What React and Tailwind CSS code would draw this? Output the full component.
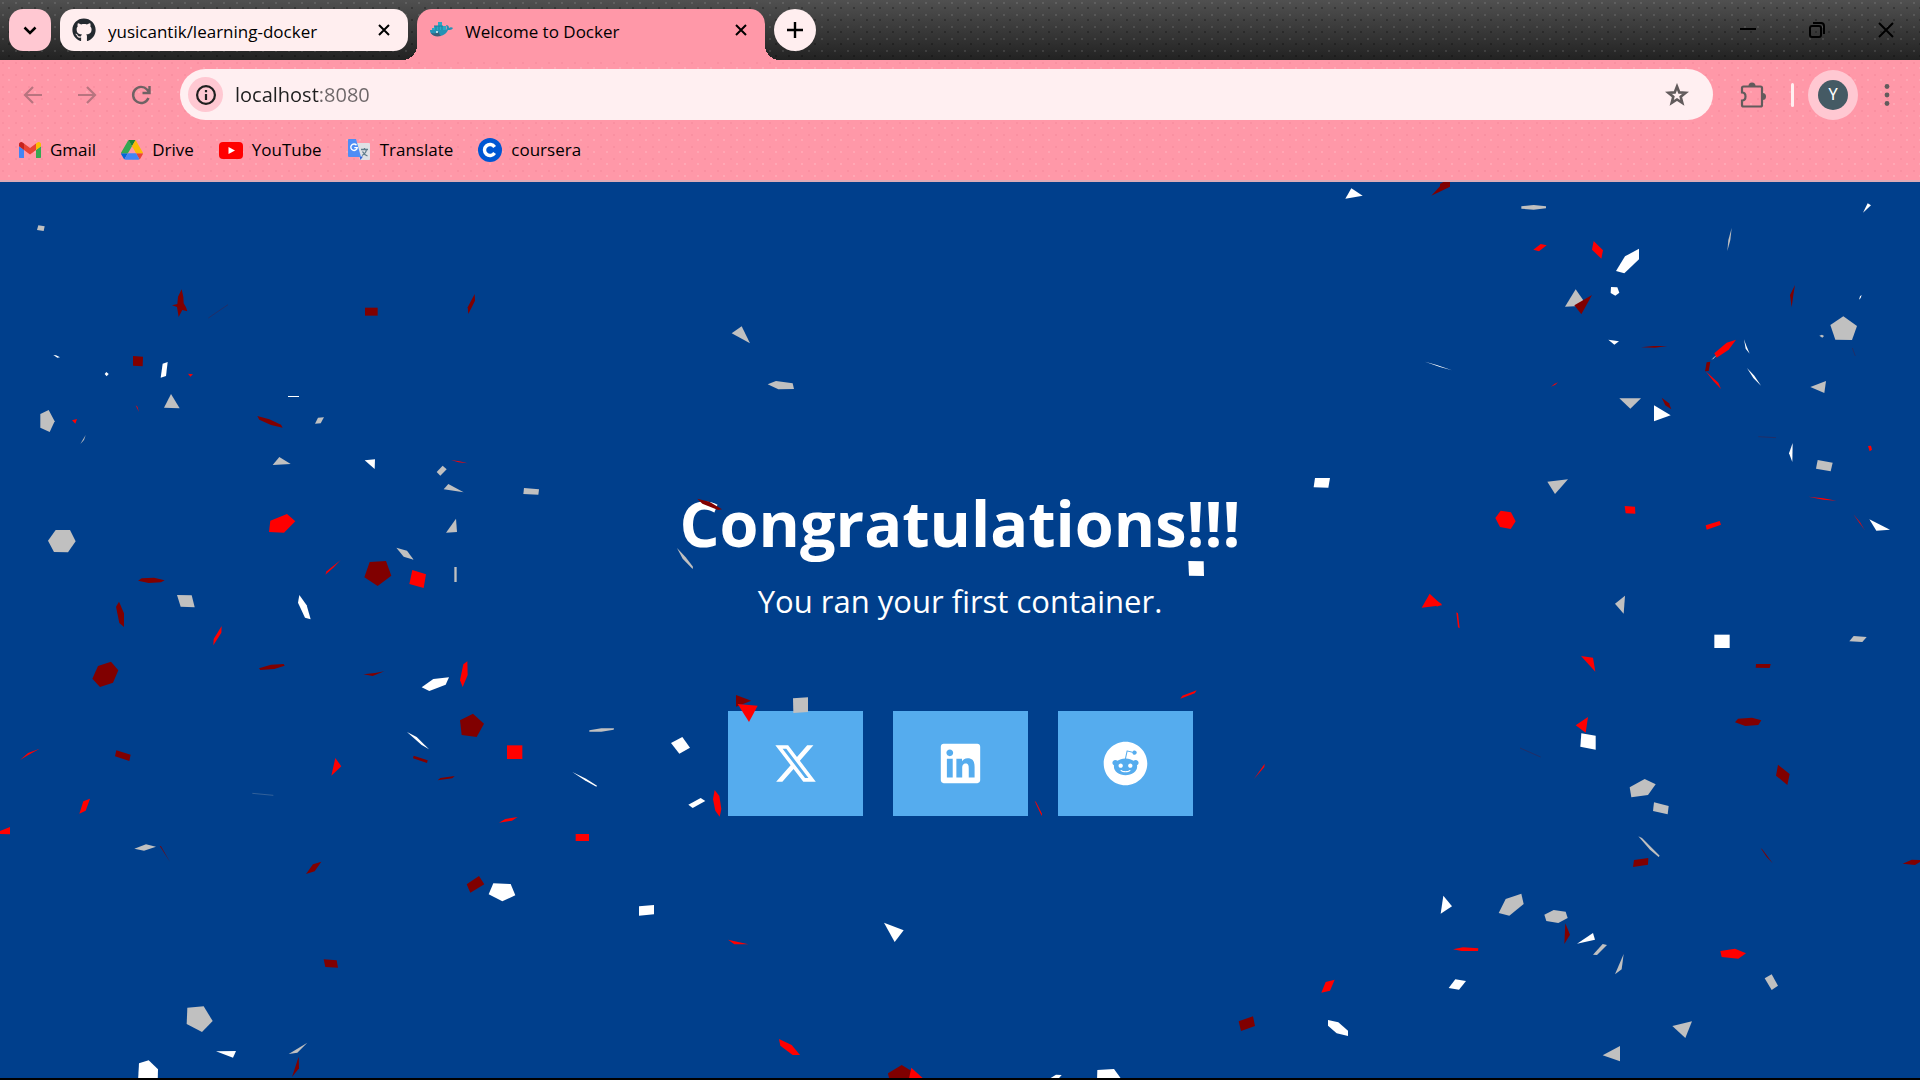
import { FaGithub, FaLinkedin, FaReddit } from "react-icons/fa";
import { FaXTwitter } from "react-icons/fa6";

const R = "#ff0000";
const M = "#800000";
const G = "#c0c0c0";
const W = "#ffffff";

/* Confetti pieces, grouped by region of the stage. Units are thirds of a pixel. */
const CONFETTI = [
  {
    x: 0,
    y: -6,
    pieces: [
      [G, "115,136 134,139 131,153 111,150"],
      [M, "545,328 550,350 551,370 558,382 562,394 547,390 536,411 531,381 516,376 532,372 534,350"],
      [M, "1095,383 1133,383 1133,407 1095,407"],
      [M, "1424,342 1425,362 1405,402 1403,382"],
      [W, "160,525 168,526 180,532 172,533"],
      [W, "319,576 326,582 320,589 314,582"],
      [M, "399,528 429,530 428,559 399,557"],
      [W, "488,551 503,546 498,588 482,593"],
      [R, "564,581 579,583 571,590"],
      [R, "407,676 412,680 417,696"],
      [G, "513,642 539,685 492,683"],
      [G, "121,702 146,690 164,724 149,756 121,743"],
      [R, "216,721 231,717 226,731"],
      [G, "257,765 252,780 241,792"],
      [W, "864,648 897,648 897,651 864,651"],
      [M, "772,708 808,718 843,734 848,743 813,735 778,719"],
      [G, "954,713 972,712 962,730 945,731"],
      [G, "838,831 872,852 818,855"],
      [W, "1094,841 1125,838 1124,867"],
      [R, "1353,840 1378,844 1403,850 1376,847"],
      [G, "1328,857 1340,868 1321,887 1310,876"],
      [G, "1345,912 1391,937 1331,928"],
      [R, "811,1022 861,1002 886,1024 852,1058 807,1056"],
      [G, "1368,1016 1371,1056 1338,1058"],
      [G, "167,1050 210,1050 227,1084 204,1117 162,1116 144,1082"],
      [G, "1189,1103 1221,1112 1241,1139 1211,1130"],
      [R, "1022,1140 1000,1163 976,1184 980,1174"],
      [M, "1109,1146 1158,1143 1174,1187 1133,1218 1093,1192"],
      [R, "1237,1170 1278,1183 1271,1224 1228,1212"],
      [G, "1363,1161 1370,1161 1370,1206 1363,1206"],
      [M, "425,1195 462,1193 494,1201 483,1207 446,1209 414,1202"],
      [G, "531,1245 575,1246 584,1282 542,1280"],
      [W, "898,1245 920,1276 932,1318 915,1313 894,1268"],
      [M, "357,1265 372,1300 372,1341 358,1329 348,1280"],
    ],
  },
  {
    x: 0,
    y: 1344,
    pieces: [
      [R, "665,-12 664,8 640,46 641,27"],
      [M, "294,108 333,95 355,121 339,158 300,171 277,146"],
      [M, "777,115 813,104 851,102 854,107 823,117 781,120"],
      [M, "1090,133 1125,129 1153,124 1118,138"],
      [W, "1300,147 1347,142 1337,164 1288,183 1265,172"],
      [R, "1390,103 1402,94 1403,135 1388,171 1380,151"],
      [M, "1380,271 1419,251 1452,281 1430,321 1385,315"],
      [R, "119,356 85,375 60,390 84,369"],
      [M, "349,361 392,374 388,393 345,379"],
      [W, "1221,306 1250,321 1287,358 1264,344"],
      [M, "1241,377 1283,391 1281,399 1239,385"],
      [M, "1321,444 1364,438 1357,445 1313,451"],
      [R, "1006,384 1024,409 994,437"],
      [R, "250,514 270,506 257,542 238,551"],
      [R, "-16,609 30,591 30,613 -10,612"],
      [G, "438,643 468,650 432,662 403,656"],
      [M, "479,647 483,649 510,696"],
      [M, "939,703 964,695 944,724 918,732"],
      [M, "1437,738 1453,763 1411,788 1400,763"],
      [M, "971,988 1010,991 1014,1013 976,1011"],
      [G, "562,1133 611,1129 638,1173 606,1206 560,1182"],
      [W, "648,1264 708,1263 699,1283"],
      [G, "922,1238 892,1268 866,1272"],
      [M, "896,1280 897,1315 876,1341"],
      [W, "417,1300 446,1291 474,1318 473,1355 414,1355"],
    ],
  },
  {
    x: 1440,
    y: -6,
    pieces: [
      [G, "785,439 810,490 755,460"],
      [G, "863,613 888,603 938,610 942,627 895,628"],
      [G, "132,924 177,928 175,944 130,942"],
      [M, "652,956 688,965 726,988 714,990 667,971"],
      [G, "591,1104 617,1132 639,1160 638,1167 608,1136"],
    ],
  },
  {
    x: 1440,
    y: 1344,
    pieces: [
      [G, "328,301 364,295 402,295 401,299 364,305 328,305"],
      [R, "81,346 127,346 127,387 81,387"],
      [W, "573,339 607,321 630,353 598,371"],
      [W, "277,426 318,446 351,467 349,470 314,451"],
      [W, "625,524 662,504 676,513 638,534"],
      [R, "704,480 718,498 724,537 719,560 706,542 699,508"],
      [R, "57,578 76,567 113,561 96,572"],
      [R, "287,612 327,612 327,633 287,633"],
      [M, "768,195 814,212 768,230"],
      [R, "773,222 833,227 807,276"],
      [G, "939,205 984,202 984,246 940,249"],
      [W, "40,760 92,762 106,796 67,814 26,793"],
      [W, "477,829 522,825 522,853 477,857"],
      [R, "744,929 805,943 763,943"],
      [W, "1212,878 1271,901 1244,936"],
      [R, "897,1227 935,1245 960,1275 938,1275 901,1247"],
      [M, "1224,1330 1265,1305 1296,1324 1290,1350 1228,1350"],
      [R, "1294,1313 1328,1344 1286,1350"],
    ],
  },
  {
    x: 2880,
    y: -6,
    pieces: [
      [W, "1174,25 1208,47 1156,56"],
      [M, "1414,47 1446,12 1470,-10 1470,20"],
      [W, "1395,545 1430,555 1476,571 1440,561"],
      [W, "1065,894 1110,894 1105,923 1061,922"],
      [W, "685,1143 731,1144 732,1188 687,1187"],
      [R, "1409,1241 1446,1276 1385,1283"],
    ],
  },
  {
    x: 2880,
    y: 1344,
    pieces: [
      [R, "667,197 710,181 704,190 661,206"],
      [R, "914,401 913,411 882,447"],
      [R, "224,513 228,516 246,551 245,558"],
      [R, "1097,1056 1124,1049 1110,1082 1084,1088"],
      [M, "836,1174 879,1159 885,1188 843,1203"],
      [W, "1104,1170 1135,1177 1164,1202 1164,1218 1130,1210 1104,1187"],
      [W, "272,1344 288,1334 305,1335 292,1350"],
      [W, "412,1320 462,1317 486,1350 411,1350"],
    ],
  },
  {
    x: 4320,
    y: -6,
    pieces: [
      [M, "0,12 24,-2 30,18 0,32"],
      [G, "244,79 281,75 318,79 318,85 281,89 244,86"],
      [R, "302,192 320,196 297,214 280,209"],
      [R, "461,183 489,211 484,236 456,209"],
      [W, "555,229 597,206 597,238 553,280 528,273"],
      [W, "513,321 532,322 538,338 526,347 512,339"],
      [W, "1283,70 1293,76 1269,98"],
      [G, "875,144 871,180 862,213 865,180"],
      [G, "407,328 432,364 418,378 375,380"],
      [M, "456,345 424,403 403,376"],
      [W, "505,479 537,484 523,494"],
      [M, "603,502 640,498 682,498 645,503"],
      [M, "1065,315 1060,345 1055,382 1050,345"],
      [W, "1265,345 1262,354 1257,359 1260,349"],
      [G, "1210,409 1251,438 1236,480 1186,479 1171,435"],
      [G, "1138,467 1146,464 1152,468 1147,473"],
      [R, "860,488 888,479 866,509 830,533 823,520"],
      [G, "830,526 822,535 814,540 822,531"],
      [M, "800,547 811,545 806,573 795,574"],
      [R, "797,574 835,608 843,627 820,603"],
      [W, "912,478 919,497 929,521 917,506"],
      [W, "921,564 943,587 963,617 940,594"],
      [R, "354,607 346,614 333,620 343,612"],
      [G, "538,655 603,655 571,686"],
      [M, "665,653 687,670 694,688 676,676"],
      [W, "642,676 692,706 642,724"],
      [G, "1158,603 1153,639 1111,621"],
      [W, "1058,789 1057,846 1047,820"],
      [R, "1284,798 1293,797 1296,809 1289,814"],
      [G, "1133,840 1178,848 1172,874 1128,866"],
      [G, "322,905 384,898 345,942"],
      [R, "182,992 213,997 227,1024 212,1047 180,1041 166,1014"],
      [R, "554,978 585,980 586,1001 557,1000"],
      [R, "797,1036 839,1023 843,1034 800,1049"],
      [R, "1105,950 1150,955 1189,962 1150,959"],
      [R, "1240,1003 1260,1027 1274,1050 1258,1028"],
      [W, "1288,1018 1350,1049 1309,1052"],
      [G, "555,1247 551,1301 525,1271"],
      [R, "-10,1262 6,1273 -10,1280"],
      [R, "49,1297 54,1300 59,1345 54,1342"],
    ],
  },
  {
    x: 4320,
    y: 1344,
    pieces: [
      [R, "423,78 459,83 466,125"],
      [W, "823,14 869,14 869,54 823,54"],
      [G, "1241,18 1280,21 1267,36 1228,34"],
      [M, "948,102 992,102 989,114 947,113"],
      [R, "444,261 437,308 407,286"],
      [W, "424,310 467,317 467,359 421,350"],
      [M, "894,266 936,263 964,271 955,285 916,288 885,277"],
      [M, "1014,404 1049,432 1042,465 1008,437"],
      [G, "569,472 614,447 647,463 624,495 574,502"],
      [G, "642,517 686,528 683,553 639,543"],
      [G, "595,619 606,624 659,677 656,681 630,659"],
      [M, "582,690 625,684 624,704 579,711"],
      [M, "962,654 968,659 998,700 980,681"],
      [M, "1415,689 1450,690 1425,705 1388,701"],
      [W, "10,797 36,829 2,851"],
      [G, "197,807 244,791 251,822 208,857 176,849"],
      [G, "313,854 341,840 377,845 383,864 355,879 319,873"],
      [M, "376,880 390,914 373,942"],
      [W, "459,909 465,929 411,941"],
      [G, "488,942 501,945 471,975 459,974"],
      [G, "551,972 545,1018 525,1033"],
      [R, "39,958 69,952 115,955 114,963 65,963"],
      [W, "46,1048 78,1053 57,1079 26,1074"],
      [R, "841,963 885,956 918,970 895,986 845,981"],
      [G, "974,1045 995,1033 1014,1067 995,1080"],
      [G, "697,1188 756,1174 736,1224"],
      [G, "540,1248 540,1294 488,1276"],
    ],
  },
];

/* Pieces seen nearly edge-on, drawn as faint hairlines. */
const HAIRLINES = [
  [G, "757,1834 820,1840"],
  [M, "625,408 684,368"],
  [M, "4560,1698 4622,1725"],
  [M, "5275,764 5328,767"],
  [M, "5557,498 5566,522"],
];

function Confetti() {
  return (
    <svg
      aria-hidden="true"
      viewBox="0 0 5760 2688"
      preserveAspectRatio="xMidYMid slice"
      className="pointer-events-none absolute inset-0 h-full w-full"
    >
      {CONFETTI.map((group, i) => (
        <g key={i} transform={`translate(${group.x} ${group.y})`}>
          {group.pieces.map(([fill, points], j) => (
            <polygon key={j} points={points} fill={fill} />
          ))}
        </g>
      ))}
      {HAIRLINES.map(([stroke, points], i) => (
        <polyline key={i} points={points} stroke={stroke} strokeWidth="2" strokeOpacity="0.4" fill="none" />
      ))}
    </svg>
  );
}

function CloseIcon({ className }) {
  return (
    <svg viewBox="0 0 12 12" className={className} fill="none" stroke="currentColor" strokeWidth="2">
      <path d="M1 1l10 10M11 1L1 11" />
    </svg>
  );
}

function DockerIcon() {
  return (
    <svg viewBox="0 0 24 24" className="h-6 w-6 shrink-0">
      <path d="M9 4h4v4H9zM5 8h12v4H5zM3 10h4v3H3z" fill="#2aa8c4" />
      <path d="M7 8v4M10 8v4M13 8v4M5 8h9" stroke="#1b7f9d" strokeWidth="1" />
      <path d="M1 12h16c1-1 1-3 0-5 2 0 3 1 3 3 1-1 3-1 4 0-1 2-3 2-5 2-2 4-5 6-10 6-5 0-8-2-8-6z" fill="#2592b5" />
      <path d="M2 15c4 1 6 0 8-1 0 2 1 3 2 4-5 1-8 0-10-3z" fill="#3a5f78" />
      <circle cx="8" cy="14" r="1" fill="#e6f4f8" />
    </svg>
  );
}

function GmailIcon() {
  return (
    <svg viewBox="52 42 88 66" className="w-[22px] shrink-0">
      <path fill="#4285f4" d="M58 108h14V74L52 59v43c0 3.32 2.69 6 6 6" />
      <path fill="#34a853" d="M120 108h14c3.32 0 6-2.69 6-6V59l-20 15" />
      <path fill="#fbbc04" d="M120 48v26l20-15v-8c0-7.42-8.47-11.65-14.4-7.2" />
      <path fill="#ea4335" d="M72 74V48l24 18 24-18v26L96 92" />
      <path fill="#c5221f" d="M52 51v8l20 15V48l-5.6-4.2c-5.94-4.45-14.4-.22-14.4 7.2" />
    </svg>
  );
}

function DriveIcon() {
  return (
    <svg viewBox="0 0 87.3 78" className="w-[22px] shrink-0">
      <path fill="#0066da" d="m6.6 66.85 3.85 6.65c.8 1.4 1.95 2.5 3.3 3.3l13.75-23.8h-27.5c0 1.55.4 3.1 1.2 4.5z" />
      <path fill="#34a853" d="m43.65 25-13.75-23.8c-1.35.8-2.5 1.9-3.3 3.3l-25.4 44a9.06 9.06 0 0 0-1.2 4.5h27.5z" />
      <path fill="#ea4335" d="m73.55 76.8c1.35-.8 2.5-1.9 3.3-3.3l1.6-2.75 7.65-13.25c.8-1.4 1.2-2.95 1.2-4.5h-27.502l5.852 11.5z" />
      <path fill="#188038" d="m43.65 25 13.75-23.8c-1.35-.8-2.9-1.2-4.5-1.2h-18.5c-1.6 0-3.15.45-4.5 1.2z" />
      <path fill="#4285f4" d="m59.8 53h-32.3l-13.75 23.8c1.35.8 2.9 1.2 4.5 1.2h50.8c1.6 0 3.15-.45 4.5-1.2z" />
      <path fill="#fbbc04" d="m73.4 26.5-12.7-22c-.8-1.4-1.95-2.5-3.3-3.3l-13.75 23.8 16.15 28h27.45c0-1.55-.4-3.1-1.2-4.5z" />
    </svg>
  );
}

function YouTubeIcon() {
  return (
    <svg viewBox="0 0 24 17" className="w-6 shrink-0">
      <rect width="24" height="17" rx="4" fill="#ff0000" />
      <path d="M9.500 5v7l6.500-3.500z" fill="#fff" />
    </svg>
  );
}

function TranslateIcon() {
  return (
    <svg viewBox="0 0 24 24" className="h-6 w-6 shrink-0">
      <path d="M8 5h14a1 1 0 0 1 1 1v15a1 1 0 0 1-1 1H13z" fill="#dfe1e5" />
      <path d="M14 11.500h7M17.500 10v1.500M19.500 11.500c-.5 3-2.500 5-4.500 6M15.500 13.500c1 2 2.500 3.500 5 4.500" stroke="#5f7d8c" strokeWidth="1.300" fill="none" />
      <path d="M12.500 18.500h3.500L13.500 22z" fill="#3367d6" />
      <path d="M2 1h7l5 18H2a1 1 0 0 1-1-1V2a1 1 0 0 1 1-1z" fill="#4f8df5" />
      <path d="M9.500 7.200A3.200 3.200 0 1 0 10.200 9.600H7.300" stroke="#fff" strokeWidth="1.400" fill="none" />
    </svg>
  );
}

function CourseraIcon() {
  return (
    <svg viewBox="0 0 24 24" className="h-6 w-6 shrink-0">
      <circle cx="12" cy="12" r="12" fill="#0056d2" />
      <path d="M16.600 9A5.500 5.500 0 1 0 16.600 15" stroke="#fff" strokeWidth="3.400" fill="none" />
    </svg>
  );
}

const BOOKMARKS = [
  { label: "Gmail", Icon: GmailIcon },
  { label: "Drive", Icon: DriveIcon },
  { label: "YouTube", Icon: YouTubeIcon },
  { label: "Translate", Icon: TranslateIcon },
  { label: "coursera", Icon: CourseraIcon },
];

function TabStrip() {
  return (
    <div className="flex h-[60px] items-start bg-[radial-gradient(circle_at_3px_3px,rgba(255,255,255,0.1)_1px,transparent_1px),radial-gradient(circle_at_9px_8px,rgba(0,0,0,0.25)_1px,transparent_1px),linear-gradient(#505050,#222222)] bg-[length:13px_12px,13px_12px,100%_100%] pt-[9px] pl-[9px]">
      <button aria-label="Search tabs" className="flex h-[42px] w-[42px] items-center justify-center rounded-[14px] bg-[#ffc8d2]">
        <svg viewBox="0 0 14 9" className="w-[14px]" fill="none" stroke="#000" strokeWidth="2.500">
          <path d="M1.500 1.500L7 7l5.500-5.500" />
        </svg>
      </button>
      <div className="ml-[9px] flex h-[42px] w-[348px] items-center gap-3 rounded-[14px] bg-[#ffeeef] pr-[18px] pl-3">
        <FaGithub className="h-6 w-6 shrink-0 text-[#24292f]" />
        <span className="flex-1 truncate pt-[3px] text-[17px] leading-6 text-black">yusicantik/learning-docker</span>
        <button aria-label="Close yusicantik/learning-docker">
          <CloseIcon className="h-3 w-3" />
        </button>
      </div>
      <div className="relative ml-[9px] flex h-[51px] w-[348px] items-center gap-3 rounded-t-[15px] bg-[#ff98a8] pr-[18px] pb-[9px] pl-3 before:absolute before:bottom-0 before:-left-[15px] before:h-[15px] before:w-[15px] before:bg-[radial-gradient(circle_at_0_0,transparent_15px,#ff98a8_15px)] after:absolute after:-right-[15px] after:bottom-0 after:h-[15px] after:w-[15px] after:bg-[radial-gradient(circle_at_100%_0,transparent_15px,#ff98a8_15px)]">
        <DockerIcon />
        <span className="flex-1 truncate pt-[3px] text-[17px] leading-6 text-black">Welcome to Docker</span>
        <button aria-label="Close Welcome to Docker">
          <CloseIcon className="h-3 w-3" />
        </button>
      </div>
      <button aria-label="New tab" className="ml-[9px] flex h-[42px] w-[42px] items-center justify-center rounded-full bg-[#ffeeef]">
        <svg viewBox="0 0 16 16" className="w-4" stroke="#000" strokeWidth="2.400">
          <path d="M8 0v16M0 8h16" />
        </svg>
      </button>
      <div className="ml-auto flex h-[42px]">
        <button aria-label="Minimize" className="flex w-[69px] items-center justify-center">
          <svg viewBox="0 0 16 16" className="w-4" stroke="#000" strokeWidth="2">
            <path d="M0 7h16" />
          </svg>
        </button>
        <button aria-label="Restore" className="flex w-[69px] items-center justify-center">
          <svg viewBox="0 0 16 16" className="w-4" fill="none" stroke="#000" strokeWidth="2">
            <rect x="1" y="4" width="11" height="11" rx="2" />
            <path d="M4 1h8a3 3 0 0 1 3 3v8" />
          </svg>
        </button>
        <button aria-label="Close" className="flex w-[69px] items-center justify-center">
          <svg viewBox="0 0 16 16" className="w-4" stroke="#000" strokeWidth="2">
            <path d="M1 1l14 14M15 1L1 15" />
          </svg>
        </button>
      </div>
    </div>
  );
}

function Toolbar() {
  return (
    <div className="flex h-[51px] items-center">
      <div className="flex w-[180px] pl-[6px]">
        <button aria-label="Back" className="flex w-[54px] justify-center text-[#b8747f]">
          <svg viewBox="0 0 20 20" className="w-5" fill="none" stroke="currentColor" strokeWidth="2.200">
            <path d="M19 10H2.500M10 2L2 10l8 8" />
          </svg>
        </button>
        <button aria-label="Forward" className="flex w-[54px] justify-center text-[#b8747f]">
          <svg viewBox="0 0 20 20" className="w-5" fill="none" stroke="currentColor" strokeWidth="2.200">
            <path d="M1 10h16.500M10 2l8 8-8 8" />
          </svg>
        </button>
        <button aria-label="Reload" className="flex w-[54px] justify-center text-[#6f6264]">
          <svg viewBox="0 0 20 20" className="w-5" fill="none" stroke="currentColor" strokeWidth="2.400">
            <path d="M17.500 13A8 8 0 1 1 16 4.500L18 7M18.500 1v7h-7" />
          </svg>
        </button>
      </div>
      <div className="flex h-[51px] flex-1 items-center rounded-full bg-[#ffeff1] pr-6 pl-2">
        <button aria-label="View site information" className="flex h-[35px] w-[35px] items-center justify-center rounded-full bg-[#ffc8d2]">
          <svg viewBox="0 0 20 20" className="w-5" fill="none" stroke="#1f1f1f" strokeWidth="2.200">
            <circle cx="10" cy="10" r="8.900" />
            <path d="M10 9v6M10 5v2.200" />
          </svg>
        </button>
        <input
          aria-label="Address and search bar"
          defaultValue="localhost:8080"
          className="ml-3 min-w-0 flex-1 bg-[linear-gradient(90deg,#1f1f1f_84px,#6d6668_84px)] bg-clip-text text-[20px] leading-7 text-transparent outline-none"
        />
        <button aria-label="Bookmark this tab">
          <svg viewBox="0 0 24 24" className="w-6" fill="none" stroke="#625b5c" strokeWidth="2.600">
            <path d="M12 3.500l2.300 5.900 6.300.4-4.900 4 1.600 6.100L12 16.500l-5.300 3.400 1.600-6.100-4.900-4 6.300-.4z" />
          </svg>
        </button>
      </div>
      <button aria-label="Extensions" className="ml-[27px]">
        <svg viewBox="0 0 26 26" className="w-[26px]" fill="none" stroke="#625b5c" strokeWidth="2.200">
          <path d="M3.500 4.500h17a1.500 1.500 0 0 1 1.500 1.500v17a1.500 1.500 0 0 1-1.500 1.500h-17A1.500 1.500 0 0 1 2 23v-4.500c2 0 3.500-1.500 3.500-4S4 10.500 2 10.500V6a1.500 1.500 0 0 1 1.500-1.500z" />
          <path d="M8.500 4a3.500 3.500 0 0 1 7 0zM22.500 11a3.500 3.500 0 0 1 0 7z" fill="#625b5c" stroke="none" />
        </svg>
      </button>
      <div className="ml-[25px] h-6 w-[3px] rounded-full bg-[#ffeff1]" />
      <button aria-label="Profile Y" className="ml-[14px] flex h-[50px] w-[50px] items-center justify-center rounded-full bg-[#ffc8d2]">
        <span className="flex h-[30px] w-[30px] items-center justify-center rounded-full bg-[#455a64] font-[Roboto,sans-serif] text-[16px] leading-none text-white">
          Y
        </span>
      </button>
      <button aria-label="Menu" className="mr-[21px] ml-[17px]">
        <svg viewBox="0 0 24 24" className="w-6" fill="#625b5c">
          <circle cx="12" cy="3.500" r="2.400" />
          <circle cx="12" cy="12" r="2.400" />
          <circle cx="12" cy="20.500" r="2.400" />
        </svg>
      </button>
    </div>
  );
}

const SHARES = [
  { label: "Share on X", Icon: FaXTwitter },
  { label: "Share on LinkedIn", Icon: FaLinkedin },
  { label: "Share on Reddit", Icon: FaReddit },
];

export default function App() {
  return (
    <div className="flex min-h-screen flex-col border-b-2 border-black bg-[#003f8c] font-['Open_Sans','Noto_Sans',sans-serif]">
      <header>
        <TabStrip />
        <div className="h-[122px] border-b-2 border-[#dcaab7] bg-[#ff98a8] bg-[radial-gradient(circle_at_3px_3px,rgba(225,100,125,0.16)_1px,transparent_1px),radial-gradient(circle_at_9px_8px,rgba(255,225,230,0.2)_1px,transparent_1px)] bg-[length:13px_12px] pt-[9px]">
          <Toolbar />
          <nav aria-label="Bookmarks" className="flex h-[60px] items-center gap-[25px] pl-[19px]">
            {BOOKMARKS.map(({ label, Icon }) => (
              <a key={label} href="#" className="flex items-center gap-[9px] text-[17px] leading-6 text-black">
                <Icon />
                {label}
              </a>
            ))}
          </nav>
        </div>
      </header>
      <main className="relative flex flex-1 flex-col items-center justify-center pt-[41px] text-white">
        <h1 className="text-[63px] leading-[76px] font-bold">Congratulations!!!</h1>
        <p className="mt-4 text-[31px] leading-[48px]">You ran your first container.</p>
        <div className="mt-[86px] flex gap-[30px]">
          {SHARES.map(({ label, Icon }) => (
            <a key={label} href="#" aria-label={label} className="flex h-[105px] w-[135px] items-center justify-center bg-[#55acee]">
              <Icon className="h-[45px] w-[45px]" />
            </a>
          ))}
        </div>
        <Confetti />
      </main>
    </div>
  );
}
